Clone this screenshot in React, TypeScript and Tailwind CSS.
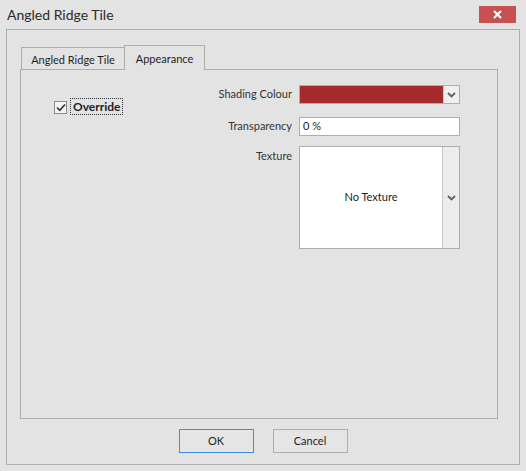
import React from "react";

function Chevron() {
  return (
    <svg width="9" height="6" viewBox="0 0 9 6" className="block">
      <path d="M1 1 L4.5 4.5 L8 1" fill="none" stroke="#5f5f5f" strokeWidth="1.8" />
    </svg>
  );
}

export default function App() {
  return (
    <div
      className="w-[526px] h-[471px] bg-[#e3e3e3] text-[#1e1e1e] text-[11px] flex flex-col overflow-hidden"
      style={{ fontFamily: 'Lato, "Liberation Sans", sans-serif' }}
    >
      {/* title bar */}
      <div className="h-[29px] flex items-start justify-between shrink-0">
        <span className="ml-[7px] mt-[5px] text-[14px] leading-[20px] text-[#2b2b2b]">Angled Ridge Tile</span>
        <button className="mt-[6px] mr-[10px] w-[37px] h-[17px] bg-[#c75050] flex items-center justify-center">
          <svg width="9" height="9" viewBox="0 0 9 9">
            <path d="M1 1 L8 8 M8 1 L1 8" stroke="#fff" strokeWidth="2" />
          </svg>
        </button>
      </div>

      {/* frame */}
      <div className="mx-[6px] h-[436px] border border-[#adadad] flex flex-col">
        {/* tabs */}
        <div className="flex items-end ml-[14px] mt-[15px] h-[24px]">
          <div className="w-[103px] h-[22px] border-l border-t border-[#adadad] flex items-center justify-center pt-px">
            <span className="leading-none">Angled Ridge Tile</span>
          </div>
          <div className="relative z-10 w-[81px] h-[25px] -mb-px border border-b-0 border-[#adadad] bg-[#e3e3e3] flex items-start justify-center pt-[7px]">
            <span className="leading-none">Appearance</span>
          </div>
        </div>

        {/* panel */}
        <div className="ml-[13px] w-[478px] h-[350px] border border-[#adadad] flex pt-[15px]">
          <div className="w-[180px] pl-[33px] pt-[14px]">
            <div className="flex items-center">
              <div className="w-[13px] h-[13px] border border-[#8c8c8c] bg-[#f4f4f4] flex items-center justify-center">
                <svg width="10" height="9" viewBox="0 0 10 9">
                  <path d="M1 4.5 L3.8 7.3 L9 1.5" fill="none" stroke="#333" strokeWidth="1.7" />
                </svg>
              </div>
              <div className="ml-[3px] mt-[-1px] h-[17px] px-[2px] border border-dotted border-[#333] flex items-center font-bold text-[12px]">
                Override
              </div>
            </div>
          </div>

          <div className="grid grid-cols-[91px_161px] gap-x-[7px] content-start">
            <div className="h-[19px] flex items-center justify-end text-[#333]">Shading Colour</div>
            <div className="h-[19px] border border-[#adadad] flex">
              <div className="flex-1 bg-[#a52a2b]" />
              <div className="w-[16px] bg-[#efefef] border-l border-[#c9c9c9] flex items-center justify-center">
                <Chevron />
              </div>
            </div>

            <div className="h-[19px] mt-[13px] flex items-center justify-end text-[#333]">Transparency</div>
            <div className="h-[19px] mt-[13px] border border-[#adadad] bg-white flex items-center pl-[3px]">0 %</div>

            <div className="mt-[10px] pt-[2px] text-right text-[#333]">Texture</div>
            <div className="mt-[10px] h-[103px] border border-[#adadad] bg-white flex">
              <div className="flex-1 flex items-center justify-center">No Texture</div>
              <div className="w-[17px] bg-[#ececec] border-l border-[#c9c9c9] flex items-center justify-center">
                <Chevron />
              </div>
            </div>
          </div>
        </div>

        {/* buttons */}
        <div className="flex justify-center gap-[19px] mt-[10px]">
          <button className="w-[75px] h-[24px] border border-[#3d8ee6] bg-[#e5e5e5]">OK</button>
          <button className="w-[75px] h-[24px] border border-[#adadad] bg-[#e5e5e5]">Cancel</button>
        </div>
      </div>
    </div>
  );
}
